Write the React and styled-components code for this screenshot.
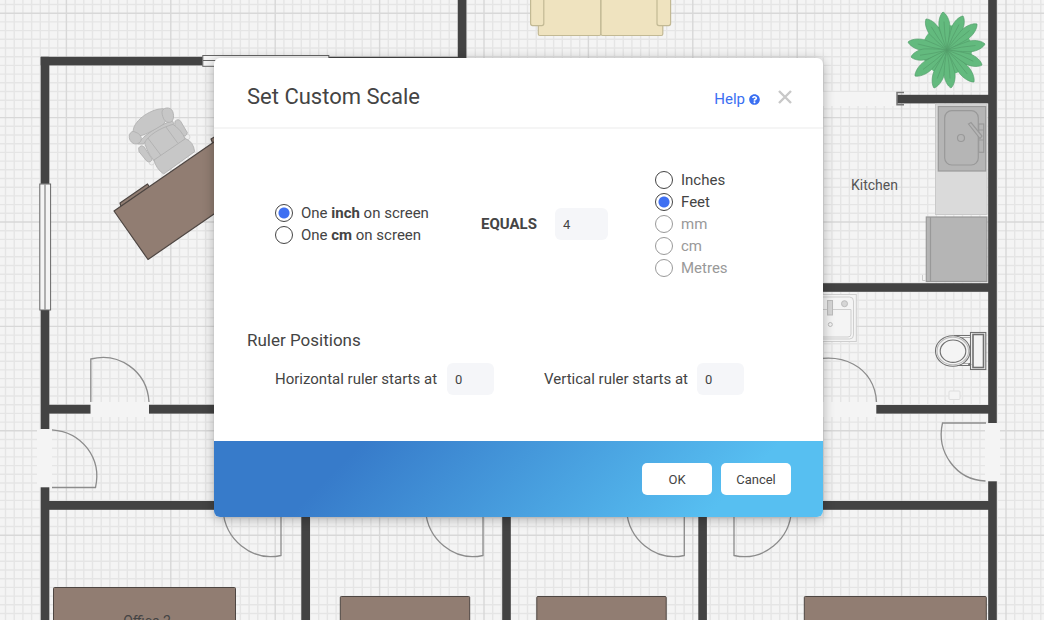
import React from "react";
import styled, { createGlobalStyle } from "styled-components";
import { FaQuestionCircle } from "react-icons/fa";

const GlobalStyle = createGlobalStyle`
  *, *::before, *::after { box-sizing: border-box; }
  body {
    margin: 0;
    background: #f4f4f4;
    color: #444;
    font-family: Roboto, "Liberation Sans", sans-serif;
  }
`;

const Page = styled.main`
  position: relative;
  display: flex;
  justify-content: center;
  align-items: flex-start;
  min-height: 100vh;
  padding: 58px 7px 40px 0;
  overflow: hidden;
`;

const Canvas = styled.svg`
  position: absolute;
  inset: 0;
  width: 100%;
  height: 100%;
  font-family: Roboto, "Liberation Sans", sans-serif;
  font-size: 14px;
`;

const Dialog = styled.section`
  position: relative;
  width: 100%;
  max-width: 609px;
  border-radius: 6px;
  background: #fff;
  box-shadow: 0 2px 12px rgba(0, 0, 0, 0.3);
  overflow: hidden;
`;

const Header = styled.header`
  display: flex;
  align-items: center;
  padding: 25px 31px 16px 33px;
  border-bottom: 2px solid #f5f5f5;
`;

const Title = styled.h1`
  flex: 1;
  margin: 0;
  font-size: 22px;
  line-height: 28px;
  font-weight: 400;
`;

const HelpLink = styled.a`
  display: flex;
  align-items: center;
  gap: 4px;
  margin-right: 18px;
  padding-top: 4px;
  color: #3a6ff2;
  font-size: 15px;
  line-height: 20px;
  text-decoration: none;
`;

const CloseButton = styled.button`
  display: flex;
  padding: 0;
  border: 0;
  background: none;
  color: #c8c8c8;
  cursor: pointer;
`;

const Body = styled.div`
  padding: 40px 33px 46px;
`;

const ScaleRow = styled.div`
  display: grid;
  grid-template-columns: 206px 174px auto;
  align-items: center;
  padding-left: 28px;
`;

const RadioGroup = styled.fieldset`
  margin: 0;
  padding: 0;
  border: 0;
  min-width: 0;
`;

const RadioLabel = styled.label`
  display: flex;
  align-items: center;
  gap: 8px;
  color: ${(p) => (p.$disabled ? "#999" : "#444")};
  font-size: 15px;
  line-height: 22px;
`;

const Radio = styled.input`
  appearance: none;
  flex: none;
  width: 18px;
  height: 18px;
  margin: 0;
  border: 1px solid #444;
  border-radius: 50%;
  background: #fff;

  &:checked {
    background: radial-gradient(circle, #3f70f2 5px, #fff 6px);
  }

  &:disabled {
    border-color: #999;
  }
`;

const EqualsLabel = styled.label`
  display: flex;
  align-items: center;
  font-size: 15px;
  font-weight: 700;
`;

const LabelText = styled.span`
  width: ${(p) => p.$width}px;
  white-space: nowrap;
`;

const NumberBox = styled.input`
  width: ${(p) => p.$width}px;
  height: 32px;
  padding: 0 8px;
  border: 0;
  border-radius: 6px;
  background: #f5f6f9;
  color: #444;
  font: 400 13px Roboto, "Liberation Sans", sans-serif;
`;

const SectionTitle = styled.h2`
  margin: 49px 0 11px;
  font-size: 17px;
  line-height: 24px;
  font-weight: 400;
`;

const RulerRow = styled.div`
  display: grid;
  grid-template-columns: 269px auto;
  padding-left: 28px;
`;

const FieldLabel = styled.label`
  display: flex;
  align-items: center;
  font-size: 15px;
`;

const Footer = styled.footer`
  display: flex;
  justify-content: flex-end;
  gap: 9px;
  padding: 22px 32px;
  background: linear-gradient(135deg, #377bca 22%, #57bff1 83%);
`;

const FooterButton = styled.button`
  width: 70px;
  height: 32px;
  padding: 0;
  border: 0;
  border-radius: 5px;
  background: #fff;
  color: #444;
  font: 400 13px Roboto, "Liberation Sans", sans-serif;
  cursor: pointer;
`;

const WALLS = [
  [40.7, 56.8, 162, 8.6],
  [40.7, 56.8, 8.6, 127],
  [40.7, 310, 8.6, 119],
  [40.7, 487.3, 8.6, 133],
  [329, 56.8, 129, 8.6],
  [457.8, 0, 8.6, 65],
  [988.2, 0, 8.6, 423],
  [988.2, 481.3, 8.6, 139],
  [897, 94.8, 92, 8.6],
  [800, 283.2, 189, 8.6],
  [876.3, 405, 113, 8.6],
  [49, 501, 940, 8.8],
  [49, 404.8, 41.5, 8.8],
  [149, 404.8, 80, 8.8],
  [301.3, 510, 8.7, 110],
  [502.2, 510, 8.6, 110],
  [698.3, 510, 8.6, 110],
];

const GAPS = [
  [90.5, 402, 58.5, 15],
  [37, 429.3, 15, 58],
  [985, 423.3, 15, 58],
  [800, 402, 76.3, 15],
  [800, 92, 96, 14],
];

const DESKS = [
  [53.5, 587.5, 182],
  [340.3, 596.5, 129.4],
  [536.8, 596.5, 129.4],
  [804.3, 596.5, 182],
];

const LEAF_TIPS = [
  [908, 42], [911, 57], [926, 19], [915, 76], [943, 12], [934, 88],
  [963, 16], [951, 88], [977, 24], [974, 82], [985, 44], [982, 65],
];

const CELL = 8.7;
const CELLS_PER_UNIT = 12;

function gridPath(major) {
  const parts = [];
  for (let i = -8; i < 116; i += 1) {
    const isMajor = (i + 1200) % CELLS_PER_UNIT === 0;
    if (isMajor === major) {
      parts.push(`M${(66.4 + i * CELL).toFixed(1)} 0V620`);
      if (i < 71) parts.push(`M0 ${(13.2 + i * CELL).toFixed(1)}H1044`);
    }
  }
  return parts.join("");
}

function Grid() {
  return (
    <g fill="none">
      <path d={gridPath(false)} stroke="#e5e5e5" strokeWidth="1.4" />
      <path d={gridPath(true)} stroke="#d8d8d8" strokeWidth="1.4" />
    </g>
  );
}

function Plant() {
  return (
    <g fill="#63ba7e" stroke="#529c69" strokeWidth="0.6" strokeLinejoin="round">
      <circle cx="947" cy="50" r="25" stroke="none" />
      {LEAF_TIPS.map(([x, y]) => {
        const dx = x - 947;
        const dy = y - 50;
        const n = Math.hypot(dx, dy);
        const angle = (Math.atan2(dy, dx) * 180) / Math.PI;
        return (
          <g key={`${x}-${y}`} transform={`translate(947 50) rotate(${angle})`}>
            <path
              d={`M0 0 C${n * 0.25} -3 ${n * 0.4} -4 ${n * 0.6} -5.4 C${n * 0.78} -6 ${n * 0.95} -3 ${n} 0 C${n * 0.95} 3 ${n * 0.78} 6 ${n * 0.6} 5.4 C${n * 0.4} 4 ${n * 0.25} 3 0 0Z`}
            />
            <path d={`M0 0 Q${n * 0.4} -1 ${n * 0.75} 0`} fill="none" />
          </g>
        );
      })}
    </g>
  );
}

function Chair() {
  return (
    <g transform="scale(0.33333)" fill="#c7c7c7" stroke="#afafaf" strokeWidth="2.5" strokeLinejoin="round">
      <g fill="#efefef" stroke="#d2d2d2">
        <circle cx="455" cy="487" r="8" />
        <circle cx="562" cy="411" r="8" />
      </g>
      <path d="M525 364 Q535 354 542 364 L562 398 Q558 412 547 407 L524 378Z" />
      <path d="M416 444 Q424 432 433 442 L456 477 Q453 491 440 483 L417 455Z" />
      <path d="M432 416 C450 388 500 364 515 370 Q545 390 556 418 L462 482 Q436 450 432 416Z" />
      <path d="M442 412 L482 465 M495 377 L533 429" fill="none" />
      <path d="M462 480 L556 416 Q580 424 584 455 L491 522 Q468 506 462 480Z" />
      <path d="M413 432 C428 408 475 376 517 362 L522 372 C480 384 446 404 431 432Z" />
      <path d="M400 398 C394 368 448 326 490 326 C504 340 502 362 488 374 C460 392 430 408 413 408Z" />
      <path d="M486 338 C484 322 512 318 518 334 C524 350 520 366 508 367 C494 368 488 354 486 338Z" />
      <path d="M400 394 C386 396 384 416 394 426 C406 438 424 430 424 416 C424 404 412 398 400 394Z" />
    </g>
  );
}

function FloorPlan() {
  return (
    <Canvas viewBox="0 0 1044 620" preserveAspectRatio="xMidYMin slice" aria-hidden="true">
      <rect width="1044" height="620" fill="#f4f4f4" />
      <Grid />

      {GAPS.map(([x, y, w, h]) => (
        <rect key={`${x}-${y}`} x={x} y={y} width={w} height={h} fill="#f4f4f4" />
      ))}
      {WALLS.map(([x, y, w, h]) => (
        <rect key={`${x}-${y}-${w}`} x={x} y={y} width={w} height={h} fill="#434343" />
      ))}

      {/* windows */}
      <g fill="#f4f4f4" stroke="#666" strokeWidth="1">
        <rect x="202.8" y="55.5" width="126" height="10.8" />
        <path d="M203 60.5H329" />
        <rect x="39.8" y="184" width="10.8" height="126" />
        <path d="M45 184V310" stroke="#999" strokeWidth="1.5" />
      </g>

      {/* doors */}
      <g fill="none" stroke="#8c8c8c" strokeWidth="1.3">
        <path d="M90.8 402V359C118 352 147 370 149 402" />
        <path d="M52 429.8C82 432 102 458 95.5 487.5H52" />
        <path d="M800 364C842 348 875 368 876.5 402" />
        <path d="M986 423H942.5C936 452 956 480 985.5 481" />
        <path d="M223 510C225 539 251 562 281 555.5V510" />
        <path d="M425.5 510C427.5 539 453.5 562 483 555.5V510" />
        <path d="M626.5 510C628.5 539 654.5 562 684.3 555.5V510" />
        <path d="M791.5 510C790 539 764 562 734 555.5V510" />
      </g>
      <path d="M904 92.5H897V104.7H904" fill="none" stroke="#777" strokeWidth="1.5" />

      {/* sofa */}
      <g fill="#efe3bf" stroke="#c2b994" strokeWidth="1.2">
        <rect x="538.3" y="-10" width="62.5" height="45.5" rx="1.5" />
        <rect x="601" y="-10" width="61.8" height="45.5" rx="1.5" />
        <rect x="530.6" y="-10" width="13.2" height="35.6" rx="2" />
        <rect x="657" y="-10" width="13.6" height="35.6" rx="2" />
      </g>

      <Chair />

      {/* corner desk */}
      <g fill="#917d72" stroke="#4e4642" strokeWidth="1.2" strokeLinejoin="round">
        <path d="M120 203L147.5 184L149.5 187L121 206.5Z" />
        <path d="M211 139L216 136V144H213Z" />
        <path d="M114 211L214 142L260 208L214 214L148 259.5Z" />
      </g>

      {DESKS.map(([x, y, w]) => (
        <rect key={x} x={x} y={y} width={w} height="60" rx="1" fill="#917d72" stroke="#4e4642" />
      ))}

      <Plant />

      {/* kitchen counter, sink and fridge */}
      <rect x="935.5" y="104" width="51.5" height="110.5" fill="#dadada" stroke="#c9c9c9" />
      <g fill="#b5b5b5" stroke="#999" strokeWidth="1.2">
        <rect x="938.3" y="106.5" width="47.4" height="64.5" />
        <rect x="944.7" y="110.7" width="33.6" height="54.3" rx="7" />
        <circle cx="961" cy="138" r="3.5" />
        <rect x="978.7" y="124" width="5" height="28.3" />
        <path d="M978.7 130H983.7M978.7 140H983.7" />
        <path d="M968.5 124L971 122.5L982 136L980 138.5Z" />
        <rect x="926.3" y="217" width="60.6" height="64.5" />
        <path d="M930.5 217V281" />
      </g>
      <path d="M922.5 275V280.5H926" fill="none" stroke="#ccc" />

      {/* bathroom basin */}
      <g fill="#f4f4f4" stroke="#cfcfcf">
        <rect x="800" y="294.5" width="56.3" height="47" />
        <rect x="802" y="297" width="51.5" height="42" rx="4" />
        <path d="M800 309.5H851V334Q851 337 848 337H800" />
        <rect x="827.5" y="300.5" width="5" height="14.5" fill="#d6d6d6" stroke="#bbb" />
        <circle cx="844.5" cy="303.7" r="3" fill="#d6d6d6" stroke="#bbb" />
        <circle cx="830.3" cy="324.5" r="2" stroke="#bbb" />
      </g>

      {/* toilet */}
      <g fill="#f4f4f4" stroke="#707070" strokeWidth="1.1">
        <path d="M954 335.5H971V365.5H957" />
        <path d="M961 337.5H971M961 363.5H971" stroke="#aaa" />
        <ellipse cx="952.8" cy="351" rx="17.3" ry="15.3" />
        <ellipse cx="952.8" cy="351" rx="15.8" ry="13.7" stroke="#bbb" />
        <ellipse cx="953" cy="351.2" rx="12.8" ry="11.2" />
        <rect x="970.5" y="332.5" width="15.3" height="37" />
        <rect x="973" y="334.5" width="10.5" height="33" strokeWidth="1.6" />
        <circle cx="969.7" cy="364.5" r="1.6" fill="#707070" stroke="none" />
      </g>
      <rect x="949" y="391" width="11" height="8.5" rx="1" fill="#f4f4f4" stroke="#dedede" />

      <text x="874.5" y="190" textAnchor="middle" fill="#555">Kitchen</text>
      <text x="147" y="626" textAnchor="middle" fill="#444">Office 2</text>
    </Canvas>
  );
}

const UNITS = [
  { name: "Inches" },
  { name: "Feet", checked: true },
  { name: "mm", disabled: true },
  { name: "cm", disabled: true },
  { name: "Metres", disabled: true },
];

export default function App() {
  return (
    <>
      <GlobalStyle />
      <Page>
        <FloorPlan />
        <Dialog role="dialog" aria-labelledby="dialog-title">
          <Header>
            <Title id="dialog-title">Set Custom Scale</Title>
            <HelpLink href="#help">
              Help <FaQuestionCircle size={11} aria-hidden="true" />
            </HelpLink>
            <CloseButton type="button" aria-label="Close">
              <svg width="14" height="14" viewBox="0 0 14 14" fill="none" stroke="currentColor" strokeWidth="2.4">
                <path d="M1 1L13 13M13 1L1 13" />
              </svg>
            </CloseButton>
          </Header>
          <Body>
            <ScaleRow>
              <RadioGroup aria-label="Screen unit">
                <RadioLabel>
                  <Radio type="radio" name="screen" defaultChecked />
                  <span>One <b>inch</b> on screen</span>
                </RadioLabel>
                <RadioLabel>
                  <Radio type="radio" name="screen" />
                  <span>One <b>cm</b> on screen</span>
                </RadioLabel>
              </RadioGroup>
              <EqualsLabel>
                <LabelText $width={74}>EQUALS</LabelText>
                <NumberBox $width={53} defaultValue="4" />
              </EqualsLabel>
              <RadioGroup aria-label="Real unit">
                {UNITS.map((u) => (
                  <RadioLabel key={u.name} $disabled={u.disabled}>
                    <Radio type="radio" name="unit" defaultChecked={u.checked} disabled={u.disabled} />
                    {u.name}
                  </RadioLabel>
                ))}
              </RadioGroup>
            </ScaleRow>
            <SectionTitle>Ruler Positions</SectionTitle>
            <RulerRow>
              <FieldLabel>
                <LabelText $width={172}>Horizontal ruler starts at</LabelText>
                <NumberBox $width={47} defaultValue="0" />
              </FieldLabel>
              <FieldLabel>
                <LabelText $width={153}>Vertical ruler starts at</LabelText>
                <NumberBox $width={47} defaultValue="0" />
              </FieldLabel>
            </RulerRow>
          </Body>
          <Footer>
            <FooterButton type="button">OK</FooterButton>
            <FooterButton type="button">Cancel</FooterButton>
          </Footer>
        </Dialog>
      </Page>
    </>
  );
}
